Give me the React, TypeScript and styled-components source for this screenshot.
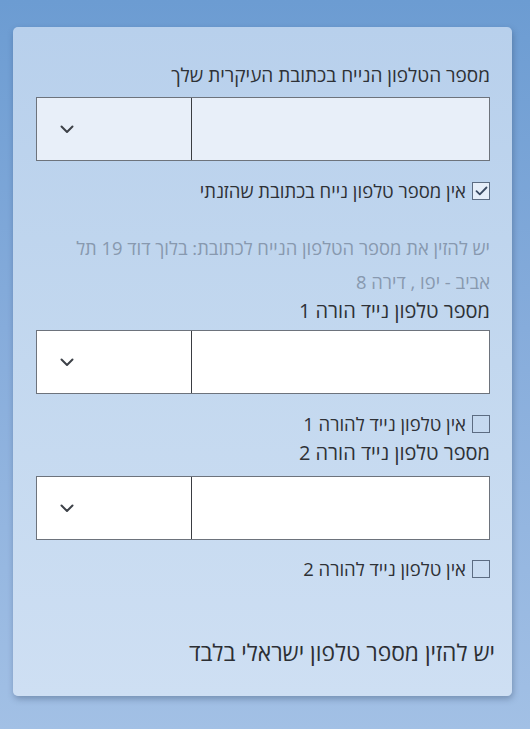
import styled, { createGlobalStyle } from "styled-components"

const GlobalStyle = createGlobalStyle`
  html, body {
    margin: 0;
    padding: 0;
  }
  body {
    font-family: "Open Sans", "Liberation Sans", "DejaVu Sans", sans-serif;
  }
`

const Page = styled.main`
  min-height: 729px;
  padding: 27px 18px 0 13px;
  box-sizing: border-box;
  background: linear-gradient(180deg, #6c9cd2 0%, #86acdb 45%, #a2c0e5 100%);
`

const Card = styled.section`
  direction: rtl;
  width: 499px;
  box-sizing: border-box;
  padding: 36px 22px 29px 23px;
  border-radius: 5px;
  background: linear-gradient(180deg, #b8d0ec 0%, #c3d8ef 50%, #cedff3 100%);
  box-shadow: 1px 3px 6px rgba(40, 60, 90, 0.35);
  display: flex;
  flex-direction: column;
`

const Label = styled.label<{ $top?: number; $size?: number }>`
  display: block;
  margin-top: ${(p) => p.$top ?? 0}px;
  font-size: ${(p) => p.$size ?? 20}px;
  line-height: 24px;
  color: #2e3136;
`

const PhoneBox = styled.div<{ $tinted?: boolean; $top?: number }>`
  display: grid;
  grid-template-columns: 1fr 154px;
  height: 64px;
  box-sizing: border-box;
  margin-top: ${(p) => p.$top ?? 10}px;
  border: 1px solid #6d737c;
  background: ${(p) => (p.$tinted ? "#e8eff9" : "#ffffff")};
`

const NumberInput = styled.input`
  border: none;
  border-left: 1px solid #3a3d42;
  background: transparent;
  font: inherit;
  font-size: 18px;
  padding: 0 12px;
  outline: none;
`

const Prefix = styled.div`
  display: flex;
  align-items: center;
  justify-content: flex-end;
  padding-left: 23px;
  color: #3d4148;
`

const CheckRow = styled.label<{ $top?: number }>`
  display: flex;
  align-items: center;
  gap: 6px;
  margin-top: ${(p) => p.$top ?? 18}px;
  font-size: 18.5px;
  line-height: 24px;
  color: #2e3136;
`

const Box = styled.span<{ $checked?: boolean }>`
  width: 18px;
  height: 18px;
  box-sizing: border-box;
  border: 1.5px solid #5c6c82;
  background: ${(p) => (p.$checked ? "#e6eef9" : "transparent")};
  display: flex;
  align-items: center;
  justify-content: center;
  flex-shrink: 0;
`

const Hint = styled.p`
  margin: 28px 0 0;
  font-size: 18.4px;
  line-height: 34px;
  color: #8899af;
`

const Footer = styled.p`
  margin: 58px -5px 0 0;
  font-size: 22.8px;
  line-height: 28px;
  color: #2c2f34;
`

function Chevron() {
  return (
    <svg width="14" height="9" viewBox="0 0 14 9" fill="none">
      <path d="M1.5 1.5 7 7l5.5-5.5" stroke="#3d4148" strokeWidth="2" strokeLinecap="round" strokeLinejoin="round" />
    </svg>
  )
}

function Checkbox({ checked, label, top }: { checked?: boolean; label: string; top?: number }) {
  return (
    <CheckRow $top={top}>
      <Box $checked={checked}>
        {checked && (
          <svg width="13" height="10" viewBox="0 0 13 10" fill="none">
            <path d="M1.5 5.2 4.8 8.3 11.5 1.5" stroke="#3a4a62" strokeWidth="1.8" strokeLinecap="round" strokeLinejoin="round" />
          </svg>
        )}
      </Box>
      {label}
    </CheckRow>
  )
}

function PhoneField({ tinted, top }: { tinted?: boolean; top?: number }) {
  return (
    <PhoneBox $tinted={tinted} $top={top}>
      <NumberInput type="tel" />
      <Prefix>
        <Chevron />
      </Prefix>
    </PhoneBox>
  )
}

export default function App() {
  return (
    <>
      <GlobalStyle />
      <Page>
        <Card>
          <Label $size={19}>מספר הטלפון הנייח בכתובת העיקרית שלך</Label>
          <PhoneField tinted />
          <Checkbox checked label="אין מספר טלפון נייח בכתובת שהזנתי" />
          <Hint>
            יש להזין את מספר הטלפון הנייח לכתובת: בלוך דוד 19 תל
            <br />
            אביב - יפו , דירה 8
          </Hint>
          <Label>מספר טלפון נייד הורה 1</Label>
          <PhoneField top={7} />
          <Checkbox label="אין טלפון נייד להורה 1" />
          <Label $top={5}>מספר טלפון נייד הורה 2</Label>
          <PhoneField top={11} />
          <Checkbox top={17} label="אין טלפון נייד להורה 2" />
          <Footer>יש להזין מספר טלפון ישראלי בלבד</Footer>
        </Card>
      </Page>
    </>
  )
}
